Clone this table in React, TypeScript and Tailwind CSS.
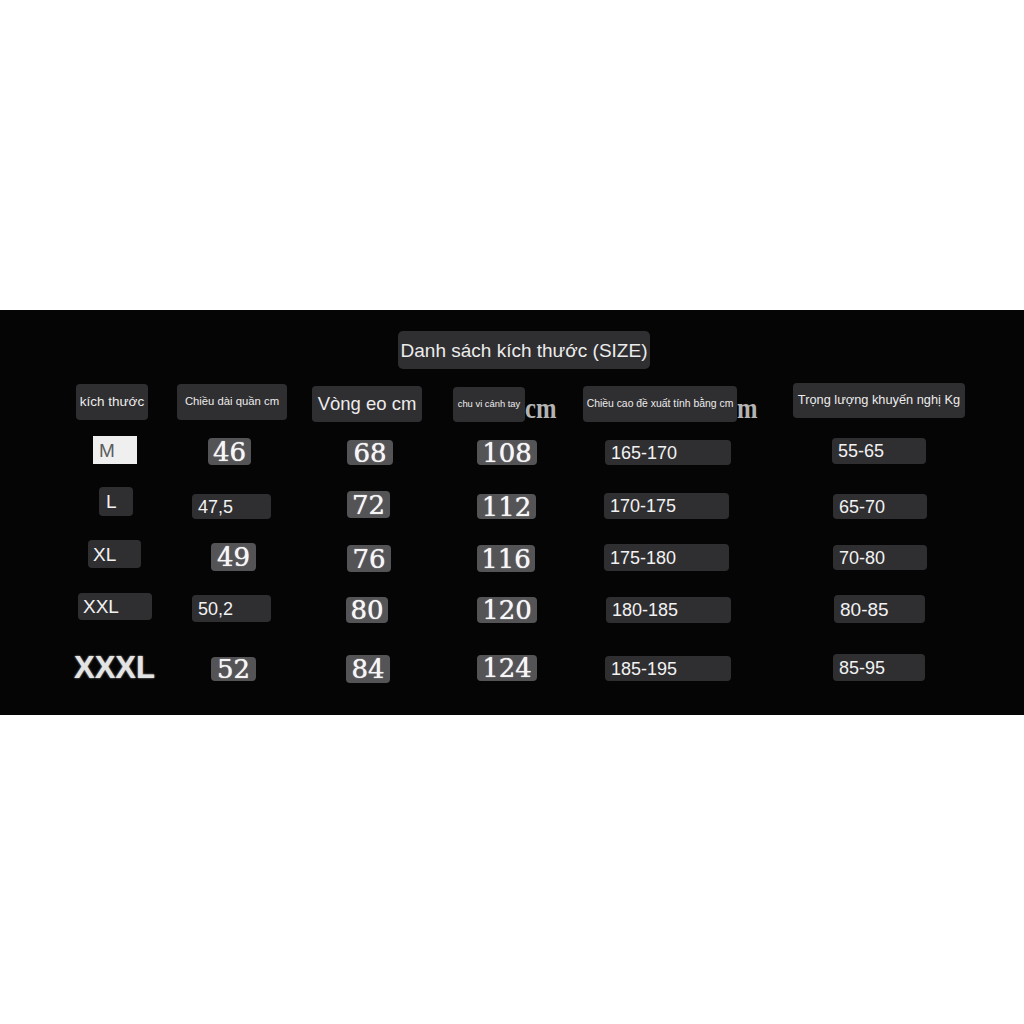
type Cell = { text: string; box: string; txt: string }

const sans = "font-['Liberation_Sans',Arial,sans-serif]"
const serif = "font-['DejaVu_Serif','Liberation_Serif',serif]"
const tserif = "font-['Liberation_Serif','Times_New_Roman',serif]"

// column widths across the band: 170 / 130 / 140 / 135 / 205 / rest
const cols = ['w-[170px]', 'w-[130px]', 'w-[140px]', 'w-[135px]', 'w-[205px]', 'w-[244px]']

const dark = 'bg-[#2f2e31] rounded-[4px] flex items-center'
const gray = 'bg-[#545457] rounded-[4px] flex items-center justify-center'
const num = `${serif} text-[26px] leading-none text-[#f6f6f6] [text-shadow:0_0_1px_#ffffff]`
const val = `${sans} text-[18px] leading-none text-[#f2f2f2] pl-[6px]`

const rows: { h: string; cells: Cell[] }[] = [
  {
    h: 'h-[28px]',
    cells: [
      { text: 'M', box: 'ml-[93px] mt-0 w-[44px] h-[28px] bg-[#efefef] flex items-center', txt: `${sans} text-[19px] leading-none text-[#5c5c5c] pl-[6px]` },
      { text: '46', box: `ml-[38px] mt-[2px] w-[43px] h-[27px] ${gray}`, txt: num },
      { text: '68', box: `ml-[47px] mt-[4px] w-[46px] h-[25px] ${gray}`, txt: num },
      { text: '108', box: `ml-[37px] mt-[4px] w-[60px] h-[25px] ${gray}`, txt: num },
      { text: '165-170', box: `ml-[30px] mt-[4px] w-[126px] h-[25px] ${dark}`, txt: val },
      { text: '55-65', box: `ml-[52px] mt-[2px] w-[94px] h-[26px] ${dark}`, txt: `${val} pl-[5px]` },
    ],
  },
  {
    h: 'h-[29px] mt-[23px]',
    cells: [
      { text: 'L', box: `ml-[99px] mt-0 w-[34px] h-[29px] ${dark}`, txt: `${sans} text-[19px] leading-none text-[#f2f2f2] pl-[7px]` },
      { text: '47,5', box: `ml-[22px] mt-[7px] w-[79px] h-[25px] ${dark}`, txt: `${val} text-[17px] pl-[5px]` },
      { text: '72', box: `ml-[47px] mt-[4px] w-[43px] h-[27px] ${gray}`, txt: num },
      { text: '112', box: `ml-[37px] mt-[7px] w-[59px] h-[25px] ${gray}`, txt: num },
      { text: '170-175', box: `ml-[29px] mt-[6px] w-[125px] h-[26px] ${dark}`, txt: val },
      { text: '65-70', box: `ml-[53px] mt-[7px] w-[94px] h-[25px] ${dark}`, txt: `${val} pl-[5px]` },
    ],
  },
  {
    h: 'h-[28px] mt-[24px]',
    cells: [
      { text: 'XL', box: `ml-[88px] mt-0 w-[53px] h-[28px] ${dark}`, txt: `${sans} text-[19px] leading-none text-[#f2f2f2] pl-[5px]` },
      { text: '49', box: `ml-[41px] mt-[3px] w-[45px] h-[28px] ${gray}`, txt: num },
      { text: '76', box: `ml-[47px] mt-[5px] w-[44px] h-[27px] ${gray}`, txt: num },
      { text: '116', box: `ml-[37px] mt-[5px] w-[58px] h-[27px] ${gray}`, txt: num },
      { text: '175-180', box: `ml-[29px] mt-[4px] w-[125px] h-[27px] ${dark}`, txt: val },
      { text: '70-80', box: `ml-[53px] mt-[5px] w-[94px] h-[25px] ${dark}`, txt: `${val} pl-[5px]` },
    ],
  },
  {
    h: 'h-[28px] mt-[25px]',
    cells: [
      { text: 'XXL', box: `ml-[78px] mt-0 w-[74px] h-[27px] ${dark}`, txt: `${sans} text-[19px] leading-none text-[#f2f2f2] pl-[5px]` },
      { text: '50,2', box: `ml-[22px] mt-[2px] w-[79px] h-[27px] ${dark}`, txt: `${val} text-[17px] pl-[5px]` },
      { text: '80', box: `ml-[46px] mt-[4px] w-[42px] h-[26px] ${gray}`, txt: num },
      { text: '120', box: `ml-[37px] mt-[4px] w-[60px] h-[26px] ${gray}`, txt: num },
      { text: '180-185', box: `ml-[31px] mt-[4px] w-[125px] h-[26px] ${dark}`, txt: val },
      { text: '80-85', box: `ml-[54px] mt-[2px] w-[91px] h-[28px] ${dark}`, txt: `${val} text-[19px] pl-[5px]` },
    ],
  },
  {
    h: 'h-[30px] mt-[32px]',
    cells: [
      { text: 'XXXL', box: 'ml-[74px] mt-0 h-[28px] flex items-center', txt: `${sans} text-[31px] font-bold leading-none text-[#e4e4e4] [text-shadow:0_0_2px_#bbbbbb]` },
      { text: '52', box: `ml-[41px] mt-[4px] w-[45px] h-[24px] ${gray}`, txt: num },
      { text: '84', box: `ml-[46px] mt-[2px] w-[44px] h-[28px] ${gray}`, txt: num },
      { text: '124', box: `ml-[37px] mt-[2px] w-[60px] h-[26px] ${gray}`, txt: num },
      { text: '185-195', box: `ml-[30px] mt-[3px] w-[126px] h-[25px] ${dark}`, txt: val },
      { text: '85-95', box: `ml-[53px] mt-[1px] w-[92px] h-[27px] ${dark}`, txt: `${val} pl-[5px]` },
    ],
  },
]

const head = `${dark} justify-center ${sans} text-[#ececec] leading-none`
const unit = `${tserif} font-bold text-[29px] leading-none text-[#b3b3b3] mt-[11px] inline-block scale-x-[0.85] origin-left`

export default function App() {
  return (
    <div className="w-[1024px] h-[1024px] bg-white overflow-hidden">
      <div className="mt-[310px] h-[405px] bg-[#050505] flex flex-col">
        <div className={`ml-[398px] mt-[21px] w-[252px] h-[38px] ${head} text-[19px] rounded-[5px]`}>
          Danh sách kích thước (SIZE)
        </div>

        <div className="flex items-start h-[38px] mt-[14px]">
          <div className={cols[0]}>
            <div className={`ml-[76px] mt-[1px] w-[72px] h-[36px] ${head} text-[13.5px]`}>kích thước</div>
          </div>
          <div className={cols[1]}>
            <div className={`ml-[7px] mt-[1px] w-[110px] h-[36px] ${head} text-[11.3px]`}>Chiều dài quần cm</div>
          </div>
          <div className={cols[2]}>
            <div className={`ml-[12px] mt-[3px] w-[110px] h-[36px] ${head} text-[18.5px]`}>Vòng eo cm</div>
          </div>
          <div className={`${cols[3]} flex items-center`}>
            <div className={`ml-[13px] mt-[2px] w-[72px] h-[35px] ${head} text-[9.4px]`}>chu vi cánh tay</div>
            <span className={unit}>cm</span>
          </div>
          <div className={`${cols[4]} flex items-center`}>
            <div className={`ml-[8px] mt-[2px] w-[154px] h-[36px] ${head} text-[10.4px]`}>Chiều cao đề xuất tính bằng cm</div>
            <span className={unit}>m</span>
          </div>
          <div className={cols[5]}>
            <div className={`ml-[13px] mt-0 w-[172px] h-[35px] ${head} text-[12.8px]`}>Trọng lượng khuyến nghị Kg</div>
          </div>
        </div>

        {rows.map((row, i) => (
          <div key={i} className={`flex items-start ${row.h} ${i === 0 ? 'mt-[15px]' : ''}`}>
            {row.cells.map((c, j) => (
              <div key={j} className={`${cols[j]} shrink-0`}>
                <div className={c.box}>
                  <span className={c.txt}>{c.text}</span>
                </div>
              </div>
            ))}
          </div>
        ))}
      </div>
    </div>
  )
}
